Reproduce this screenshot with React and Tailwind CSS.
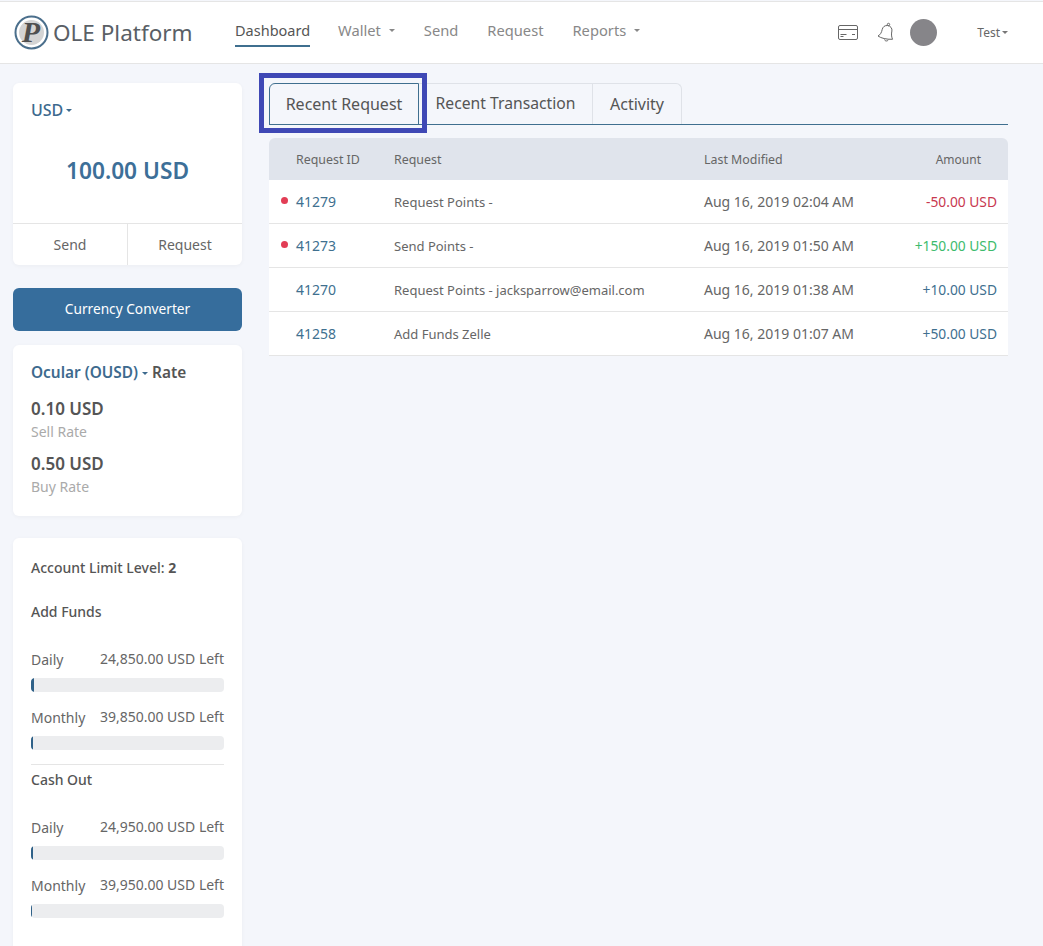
const navLinks = [
  { label: "Wallet", caret: true },
  { label: "Send" },
  { label: "Request" },
  { label: "Reports", caret: true },
];

const rows = [
  { id: "41279", dot: true, request: "Request Points -", date: "Aug 16, 2019 02:04 AM", amount: "-50.00 USD", color: "text-[#c8384f]" },
  { id: "41273", dot: true, request: "Send Points -", date: "Aug 16, 2019 01:50 AM", amount: "+150.00 USD", color: "text-[#3dbb6d]" },
  { id: "41270", request: "Request Points - jacksparrow@email.com", date: "Aug 16, 2019 01:38 AM", amount: "+10.00 USD", color: "text-[#40708f]" },
  { id: "41258", request: "Add Funds Zelle", date: "Aug 16, 2019 01:07 AM", amount: "+50.00 USD", color: "text-[#40708f]" },
];

function Caret({ className = "border-t-[#777]" }) {
  return <span className={`inline-block w-0 h-0 border-x-[3px] border-x-transparent border-t-[3px] ${className}`} />;
}

function Logo() {
  return (
    <svg width="35" height="35" viewBox="0 0 35 35" className="shrink-0">
      <circle cx="17.5" cy="17.5" r="16" fill="#fff" stroke="#4b6f8c" strokeWidth="2" />
      <circle cx="17.5" cy="17.5" r="12.5" fill="#d4d4d4" />
      <text x="17" y="27" textAnchor="middle" fontFamily="Liberation Serif" fontSize="30" fontWeight="700" fontStyle="italic" fill="#4f4f4f">P</text>
    </svg>
  );
}

function CardIcon() {
  return (
    <svg width="22" height="17" viewBox="0 0 22 17" fill="none" stroke="#666" strokeWidth="1" className="shrink-0">
      <rect x="1.5" y="1.5" width="19" height="14" rx="1.5" />
      <path d="M1.500 5.500h19M3.500 10.500h6M15 10.500h3M3.500 12.500h3" />
    </svg>
  );
}

function BellIcon() {
  return (
    <svg width="18" height="21" viewBox="0 0 18 21" fill="none" stroke="#666" strokeWidth="1" className="ml-[18px] shrink-0">
      <circle cx="11.500" cy="2.500" r="1.200" />
      <path d="M10.500 3.500C7.500 3.300 5.800 5 5.200 7.500 4.500 10.500 3.600 12.500 1 14c3 2.200 8.500 3.500 14.500 3.300 -1.200 -3 -1.200 -5.500 -.6 -8.300 .5 -2.500 -1.400 -5.300 -4.400 -5.500Z" />
      <path d="M7.500 17.500c.2 1.600 2.900 2.200 3.900 .2" />
    </svg>
  );
}

function Limit({ label, left, fill }) {
  return (
    <div className="h-[58px]">
      <div className="flex justify-between items-start text-[14px] leading-5 text-[#666]">
        <span className="mt-[1px]">{label}</span>
        <span>{left}</span>
      </div>
      <div className="mt-[8px] h-[14px] rounded-[4px] bg-[#ecedef] overflow-hidden">
        <div className={`h-full rounded-l-[4px] bg-[#2f6188] ${fill}`} />
      </div>
    </div>
  );
}

export default function App() {
  return (
    <div className="h-[946px] overflow-hidden bg-[#f4f6fb] text-[#555] font-['Noto_Sans',sans-serif]">
      {/* top bar */}
      <nav className="h-[63px] mt-[1px] bg-white border-t border-b border-[#e5e5e5] flex items-center pl-[14px]">
        <Logo />
        <span className="ml-[4px] text-[22.5px] text-[#5a5f66] w-[182px] whitespace-nowrap">OLE Platform</span>
        <a className="-mt-[2px] h-[30px] leading-[27px] border-b-2 border-[#3f6f8f] text-[14.5px] text-[#555]">Dashboard</a>
        <div className="-mt-[4px] -ml-[1px] flex items-center">
          {navLinks.map((link) => (
            <span key={link.label} className="ml-[29px] flex items-center gap-[8px] text-[14.7px] text-[#888]">
              {link.label}
              {link.caret && <Caret className="border-t-[#888]" />}
            </span>
          ))}
        </div>
        <div className="ml-auto flex items-center">
          <CardIcon />
          <BellIcon />
          <div className="ml-[15px] w-[27px] h-[27px] rounded-full bg-[#868589]" />
          <span className="ml-[40px] mr-[35px] flex items-center gap-[2px] text-[12px] text-[#666]">
            Test <Caret />
          </span>
        </div>
      </nav>

      <div className="flex pt-[19px] pl-[13px]">
        {/* sidebar */}
        <aside className="w-[229px] shrink-0 flex flex-col">
          <div className="h-[182px] bg-white rounded-[6px] shadow-[0_1px_4px_rgba(0,0,0,0.04)] flex flex-col">
            <div className="px-[18px] pt-[15px] flex items-center gap-[3px] text-[16px] font-medium text-[#3d6a8e]">
              USD <Caret className="border-t-[#3d6a8e]" />
            </div>
            <div className="mt-[32px] text-center text-[22.7px] font-semibold text-[#3d6f98]">100.00 USD</div>
            <div className="mt-auto h-[42px] border-t border-[#e5e5e5] flex text-[14px] text-[#666]">
              <div className="w-[115px] border-r border-[#e5e5e5] flex items-center justify-center">Send</div>
              <div className="flex-1 flex items-center justify-center">Request</div>
            </div>
          </div>

          <button className="mt-[23px] h-[43px] rounded-[6px] bg-[#366d9c] text-white text-[13.7px]">Currency Converter</button>

          <div className="mt-[14px] h-[171px] bg-white rounded-[6px] shadow-[0_1px_4px_rgba(0,0,0,0.04)] px-[18px] pt-[18px]">
            <div className="flex items-center gap-[4px] text-[15.4px] font-semibold text-[#3d6a8e] leading-5">
              Ocular (OUSD) <Caret className="border-t-[#3d6a8e]" /> <span className="text-[#555]">Rate</span>
            </div>
            <div className="mt-[16px] text-[17px] font-semibold leading-5 text-[#555]">0.10 USD</div>
            <div className="mt-[3px] text-[14px] leading-5 text-[#aaa]">Sell Rate</div>
            <div className="mt-[12px] text-[17px] font-semibold leading-5 text-[#555]">0.50 USD</div>
            <div className="mt-[3px] text-[14px] leading-5 text-[#aaa]">Buy Rate</div>
          </div>

          <div className="mt-[22px] bg-white rounded-[6px] shadow-[0_1px_4px_rgba(0,0,0,0.04)] px-[18px] pt-[20px] pb-[30px]">
            <div className="text-[14px] leading-5 font-medium text-[#555]">Account Limit Level: <b>2</b></div>
            <div className="mt-[24px] text-[14px] leading-5 font-medium text-[#555]">Add Funds</div>
            <div className="mt-[27px]">
              <Limit label="Daily" left="24,850.00 USD Left" fill="w-[3px]" />
              <Limit label="Monthly" left="39,850.00 USD Left" fill="w-[2px]" />
            </div>
            <div className="-mt-[1px] border-t border-[#e5e5e5] pt-[5px] text-[14px] leading-5 font-medium text-[#555]">Cash Out</div>
            <div className="mt-[27px]">
              <Limit label="Daily" left="24,950.00 USD Left" fill="w-[2px]" />
              <Limit label="Monthly" left="39,950.00 USD Left" fill="w-[1px]" />
            </div>
          </div>
        </aside>

        {/* main */}
        <main className="ml-[27px] w-[739px] shrink-0">
          <div className="relative flex h-[42px] border-b border-[#3f6f8f]">
            <div className="w-[150px] h-[42px] rounded-tl-[6px] border border-[#3f6f8f] flex items-center justify-center text-[16px] text-[#555]">Recent Request</div>
            <div className="w-[174px] h-[41px] border-t border-r border-[#dfe2e8] flex items-center justify-center text-[15.7px] text-[#555]">Recent Transaction</div>
            <div className="w-[89px] h-[41px] rounded-tr-[6px] border-t border-r border-[#dfe2e8] flex items-center justify-center text-[16px] text-[#555]">Activity</div>
            {/* highlight drawn over the screenshot */}
            <div className="absolute left-[-10px] top-[-10px] w-[168px] h-[60px] border-[5px] border-[#3f48b5] pointer-events-none" />
          </div>

          <div className="mt-[13px] text-[13px] text-[#666]">
            <div className="h-[42px] pt-[2px] bg-[#e0e4ec] rounded-t-[6px] flex items-center text-[12.4px]">
              <span className="w-[125px] pl-[27px]">Request ID</span>
              <span className="w-[310px]">Request</span>
              <span className="flex-1">Last Modified</span>
              <span className="pr-[27px] text-[12px]">Amount</span>
            </div>
            {rows.map((row) => (
              <div key={row.id} className="h-[44px] pt-[1px] bg-white border-b border-[#e5e5e5] flex items-center">
                <span className="relative -mt-[1px] w-[125px] pl-[27px] text-[14px] text-[#40708f]">
                  {row.dot && <span className="absolute left-[12px] top-[6px] w-[7px] h-[7px] rounded-full bg-[#e23d55]" />}
                  {row.id}
                </span>
                <span className="mt-[1px] w-[310px] whitespace-nowrap">{row.request}</span>
                <span className="-mt-[1px] flex-1 text-[14px]">{row.date}</span>
                <span className={`pr-[11px] text-[13.8px] ${row.color}`}>{row.amount}</span>
              </div>
            ))}
          </div>
        </main>
      </div>
    </div>
  );
}
